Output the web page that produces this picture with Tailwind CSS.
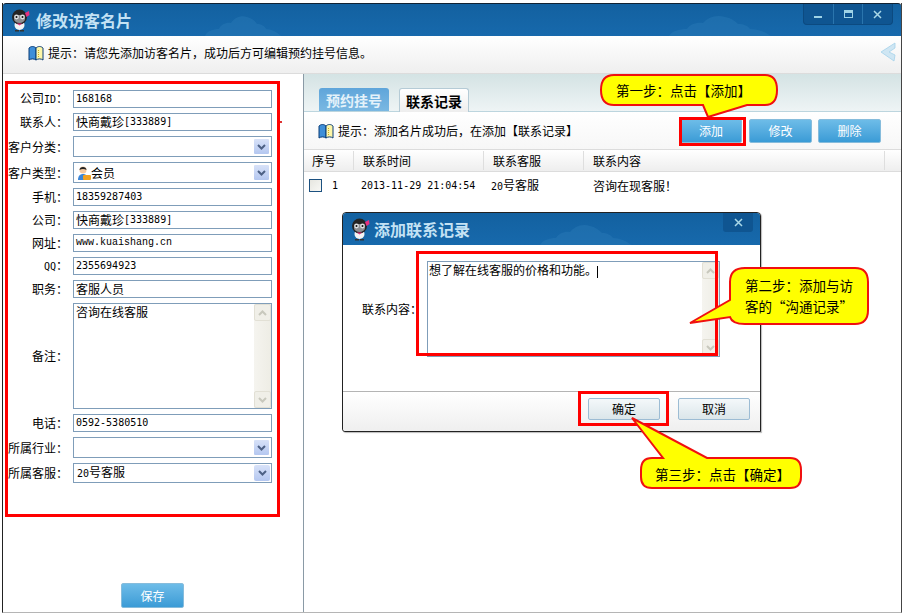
<!DOCTYPE html>
<html lang="zh-CN">
<head>
    <meta charset="UTF-8">
    <title>修改访客名片</title>
    <script src="https://cdn.jsdelivr.net/npm/@tailwindcss/browser@4"></script>
</head>
<body class="bg-white">
<div class="relative w-[903px] h-[614px] overflow-hidden bg-white text-black text-[12px] leading-[14px] font-['Noto_Sans_CJK_SC',sans-serif]">

    <!-- main window -->
    <div class="ml-[2px] mt-[3px] w-[900px] h-[610px] flex flex-col border-l border-r border-b border-l-[#222] border-r-[#444] border-b-[#b5b5b5]">
        <!-- title bar -->
        <div class="relative h-[33px] shrink-0 flex items-center pl-[7px] gap-[6px] rounded-t-[3px] border-t border-[#123] bg-gradient-to-b from-[#1361a0] to-[#1769ac]">
            <svg width="20" height="23" viewBox="0 0 20 23">
                <ellipse cx="9.500" cy="16" rx="5" ry="5" fill="#f4f4f4"/>
                <circle cx="9.500" cy="8" r="7.500" fill="#242424"/>
                <ellipse cx="9.500" cy="10" rx="5.500" ry="4" fill="#8d8f92"/>
                <circle cx="6.500" cy="8" r="2.400" fill="#dfe2e4"/>
                <circle cx="12.500" cy="8" r="2.400" fill="#dfe2e4"/>
                <circle cx="6.500" cy="8" r="1" fill="#111"/>
                <circle cx="12.500" cy="8" r="1" fill="#111"/>
                <path d="M15 4l4-2 .5 4-3 2z" fill="#e8307f"/>
                <path d="M7 14.500h5l-2.500 2z" fill="#e8307f"/>
                <path d="M5 21h4v1.500H5zM10 21h4v1.500h-4z" fill="#333"/>
            </svg>
            <span class="text-[16px] font-bold text-[#c4e2f4]">修改访客名片</span>
            <svg class="absolute left-[200px] top-[6px]" width="80" height="26" viewBox="0 0 80 26"><path d="M2 26c2-5 8-7 14-7 2-5 8-7 12-6 3-5 10-8 16-6 5 1 8 4 10 7 4 0 8 2 9 5 5 0 11 3 15 7z" fill="#2c7cb8" opacity=".4"/></svg>
            <svg class="absolute left-[664px] top-[6px]" width="106" height="26" viewBox="0 0 106 26"><path d="M2 26c3-5 10-7 18-7 3-5 10-7 16-6 4-5 13-9 22-6 6 1 10 4 13 7 6 0 10 2 12 5 7 0 16 3 21 7z" fill="#2c7cb8" opacity=".4"/></svg>
            <!-- window buttons -->
            <div class="absolute right-[8px] top-0 h-[21px] w-[90px] flex rounded-b-[4px] bg-[#0f5591] border border-t-0 border-[#0c4a80]">
                <div class="flex-1 flex items-center justify-center border-r border-[#2a75ad]"><div class="w-[8px] h-[2px] mt-[6px] bg-[#9fd3e6]"></div></div>
                <div class="flex-1 flex items-center justify-center border-r border-[#2a75ad]"><div class="w-[9px] h-[8px] border border-[#9fd3e6] border-t-[3px]"></div></div>
                <div class="flex-1 flex items-center justify-center">
                    <svg width="9" height="9" viewBox="0 0 9 9"><path d="M1 1l7 7M8 1l-7 7" stroke="#a9d8e8" stroke-width="1.500"/></svg>
                </div>
            </div>
        </div>

        <!-- tip header -->
        <div class="relative h-[38px] shrink-0 flex items-center pl-[25px] pb-[4px] gap-[4px] bg-gradient-to-b from-white to-[#efefef] border-b border-[#dcdcdc]">
            <svg width="16" height="16" viewBox="0 0 16 16">
                <path d="M1 3c2-2 5-2 7 0v12c-2-1.500-5-1.500-7 0z" fill="#3f8fd8" stroke="#0b3d77"/>
                <path d="M8 3c2-2 5-2 7 0v12c-2-1.500-5-1.500-7 0z" fill="#fdf6a8" stroke="#0b3d77"/>
                <path d="M10.500 5v7" stroke="#c9a825" stroke-dasharray="1 1"/>
            </svg>
            <span>提示&#xFF1A;请您先添加访客名片&#xFF0C;成功后方可编辑预约挂号信息。</span>
            <svg class="absolute right-[5px] top-[6px]" width="16" height="20" viewBox="0 0 16 20"><path d="M15 1L1 10l13 9 1-6-6-3 6-4z" fill="#cfe6f3" stroke="#a5d2ea" stroke-width=".8"/></svg>
        </div>

        <!-- body -->
        <div class="flex-1 flex min-h-0">
            <!-- left form -->
            <div class="relative w-[301px] shrink-0 border-r border-[#8a9aa6] flex flex-col pt-[16px]">
                <div class="flex flex-col gap-[5px]">
                    <div class="flex items-center h-[18px]">
                        <div class="w-[65px] text-right whitespace-nowrap">公司<span class="font-['DejaVu_Sans_Mono'] text-[10px]">ID</span>&#xFF1A;</div>
                        <div class="ml-[5px] w-[199px] h-full border border-[#7f9db9] pl-[2px] flex items-center font-['DejaVu_Sans_Mono'] text-[10px]">168168</div>
                    </div>
                    <div class="flex items-center h-[18px]">
                        <div class="w-[65px] text-right whitespace-nowrap">联系人&#xFF1A;</div>
                        <div class="ml-[5px] w-[199px] h-full border border-[#7f9db9] pl-[2px] flex items-center">快商戴珍<span class="font-['DejaVu_Sans_Mono'] text-[10px]">[333889]</span></div>
                    </div>
                    <div class="flex items-center h-[21px]">
                        <div class="w-[65px] text-right whitespace-nowrap">客户分类&#xFF1A;</div>
                        <div class="ml-[5px] w-[199px] h-full border border-[#7f9db9] pl-[2px] flex items-center justify-end pr-[1px]">
                            <div class="w-[17px] h-[17px] flex items-center justify-center rounded-[2px] border border-white bg-gradient-to-b from-[#d8e2f8] to-[#b4c7f0]"><svg width="9" height="6" viewBox="0 0 9 6"><path d="M1 1l3.500 3.500L8 1" fill="none" stroke="#4d6185" stroke-width="2"/></svg></div>
                        </div>
                    </div>
                    <div class="flex items-center h-[21px]">
                        <div class="w-[65px] text-right whitespace-nowrap">客户类型&#xFF1A;</div>
                        <div class="ml-[5px] w-[199px] h-full border border-[#7f9db9] pl-[3px] flex items-center pr-[1px]">
                            <svg width="14" height="16" viewBox="0 0 14 16">
                                <circle cx="6" cy="5" r="3.500" fill="#f4c9a0"/>
                                <path d="M2.500 5c0-4 7-4 7 0-2-1.500-5-1.500-7 0z" fill="#222"/>
                                <path d="M1 15c0-4 2-6 5-6s5 2 5 6z" fill="#3c86d8"/>
                                <rect x="6" y="10" width="8" height="5" rx="1" fill="#f0a020"/>
                            </svg>
                            <span class="flex-1">会员</span>
                            <div class="w-[17px] h-[17px] flex items-center justify-center rounded-[2px] border border-white bg-gradient-to-b from-[#d8e2f8] to-[#b4c7f0]"><svg width="9" height="6" viewBox="0 0 9 6"><path d="M1 1l3.500 3.500L8 1" fill="none" stroke="#4d6185" stroke-width="2"/></svg></div>
                        </div>
                    </div>
                    <div class="flex items-center h-[18px]">
                        <div class="w-[65px] text-right whitespace-nowrap">手机&#xFF1A;</div>
                        <div class="ml-[5px] w-[199px] h-full border border-[#7f9db9] pl-[2px] flex items-center font-['DejaVu_Sans_Mono'] text-[10px]">18359287403</div>
                    </div>
                    <div class="flex items-center h-[18px]">
                        <div class="w-[65px] text-right whitespace-nowrap">公司&#xFF1A;</div>
                        <div class="ml-[5px] w-[199px] h-full border border-[#7f9db9] pl-[2px] flex items-center">快商戴珍<span class="font-['DejaVu_Sans_Mono'] text-[10px]">[333889]</span></div>
                    </div>
                    <div class="flex items-center h-[18px]">
                        <div class="w-[65px] text-right whitespace-nowrap">网址&#xFF1A;</div>
                        <div class="ml-[5px] w-[199px] h-full border border-[#7f9db9] pl-[2px] flex items-center font-['Liberation_Mono'] text-[10px]">www.kuaishang.cn</div>
                    </div>
                    <div class="flex items-center h-[18px]">
                        <div class="w-[65px] text-right whitespace-nowrap"><span class="font-['DejaVu_Sans_Mono'] text-[10px]">QQ</span>&#xFF1A;</div>
                        <div class="ml-[5px] w-[199px] h-full border border-[#7f9db9] pl-[2px] flex items-center font-['DejaVu_Sans_Mono'] text-[10px]">2355694923</div>
                    </div>
                    <div class="flex items-center h-[18px]">
                        <div class="w-[65px] text-right whitespace-nowrap">职务&#xFF1A;</div>
                        <div class="ml-[5px] w-[199px] h-full border border-[#7f9db9] pl-[2px] flex items-center">客服人员</div>
                    </div>
                    <div class="flex items-center h-[106px]">
                        <div class="w-[65px] text-right whitespace-nowrap">备注&#xFF1A;</div>
                        <div class="ml-[5px] w-[199px] h-full border border-[#7f9db9] flex">
                            <div class="flex-1 pl-[2px] pt-[1px]">咨询在线客服</div>
                            <div class="w-[17px] h-full flex flex-col justify-between bg-gradient-to-r from-[#f5f4ef] to-[#eeede5]">
                                <div class="h-[17px] flex items-center justify-center rounded-[2px] border border-[#e2e0d5] bg-[#f0efe8]"><svg width="9" height="6" viewBox="0 0 9 6"><path d="M1 5l3.500-3.500L8 5" fill="none" stroke="#c8c8bd" stroke-width="2"/></svg></div>
                                <div class="h-[17px] flex items-center justify-center rounded-[2px] border border-[#e2e0d5] bg-[#f0efe8]"><svg width="9" height="6" viewBox="0 0 9 6"><path d="M1 1l3.500 3.500L8 1" fill="none" stroke="#c8c8bd" stroke-width="2"/></svg></div>
                            </div>
                        </div>
                    </div>
                    <div class="flex items-center h-[18px]">
                        <div class="w-[65px] text-right whitespace-nowrap">电话&#xFF1A;</div>
                        <div class="ml-[5px] w-[199px] h-full border border-[#7f9db9] pl-[2px] flex items-center font-['DejaVu_Sans_Mono'] text-[10px]">0592-5380510</div>
                    </div>
                    <div class="flex items-center h-[21px]">
                        <div class="w-[65px] text-right whitespace-nowrap">所属行业&#xFF1A;</div>
                        <div class="ml-[5px] w-[199px] h-full border border-[#7f9db9] pl-[2px] flex items-center justify-end pr-[1px]">
                            <div class="w-[17px] h-[17px] flex items-center justify-center rounded-[2px] border border-white bg-gradient-to-b from-[#d8e2f8] to-[#b4c7f0]"><svg width="9" height="6" viewBox="0 0 9 6"><path d="M1 1l3.500 3.500L8 1" fill="none" stroke="#4d6185" stroke-width="2"/></svg></div>
                        </div>
                    </div>
                    <div class="flex items-center h-[20px]">
                        <div class="w-[65px] text-right whitespace-nowrap">所属客服&#xFF1A;</div>
                        <div class="ml-[5px] w-[199px] h-full border border-[#7f9db9] pl-[3px] flex items-center pr-[1px]">
                            <span class="flex-1"><span class="font-['DejaVu_Sans_Mono'] text-[10px]">20</span>号客服</span>
                            <div class="w-[16px] h-[16px] flex items-center justify-center rounded-[2px] bg-gradient-to-b from-[#d8e2f8] to-[#b4c7f0]"><svg width="9" height="6" viewBox="0 0 9 6"><path d="M1 1l3.500 3.500L8 1" fill="none" stroke="#4d6185" stroke-width="2"/></svg></div>
                        </div>
                    </div>
                </div>
                <div class="mt-auto mb-[4px] self-start ml-[118px] w-[63px] h-[25px] flex items-center justify-center rounded-[2px] border border-[#86bcdc] bg-gradient-to-b from-[#6dbce8] to-[#3a9bd6] text-white">保存</div>
            </div>

            <!-- right panel -->
            <div class="flex-1 flex flex-col min-w-0">
                <div class="h-[38px] shrink-0 flex items-end pl-[15px] gap-[10px] bg-gradient-to-b from-[#d4e3e4] to-[#eef4f5] border-b border-[#bcd5de]">
                    <div class="w-[70px] h-[23px] flex items-center justify-center rounded-t-[3px] bg-gradient-to-b from-[#5fa5da] to-[#7ab8e2] text-[#e4f2fa] text-[14px] font-bold">预约挂号</div>
                    <div class="w-[70px] h-[24px] -mb-px flex items-center justify-center rounded-t-[3px] border border-b-0 border-[#b5cbd6] bg-gradient-to-b from-white to-[#eeeeee] text-[14px] font-bold">联系记录</div>
                </div>
                <div class="h-[37px] shrink-0 flex items-center pl-[14px] pr-[20px] gap-[4px] bg-gradient-to-b from-white to-[#f7f7f7]">
                    <svg width="16" height="16" viewBox="0 0 16 16">
                        <path d="M1 3c2-2 5-2 7 0v12c-2-1.500-5-1.500-7 0z" fill="#3f8fd8" stroke="#0b3d77"/>
                        <path d="M8 3c2-2 5-2 7 0v12c-2-1.500-5-1.500-7 0z" fill="#fdf6a8" stroke="#0b3d77"/>
                        <path d="M10.500 5v7" stroke="#c9a825" stroke-dasharray="1 1"/>
                    </svg>
                    <span class="flex-1">提示&#xFF1A;添加名片成功后&#xFF0C;在添加【联系记录】</span>
                    <div class="w-[62px] h-[24px] flex items-center justify-center rounded-[2px] border border-[#86bcdc] bg-gradient-to-b from-[#6dbce8] to-[#3a9bd6] text-white">添加</div>
                    <div class="ml-[3px] w-[63px] h-[24px] flex items-center justify-center rounded-[2px] border border-[#86bcdc] bg-gradient-to-b from-[#6dbce8] to-[#3a9bd6] text-white">修改</div>
                    <div class="ml-[2px] w-[63px] h-[24px] flex items-center justify-center rounded-[2px] border border-[#86bcdc] bg-gradient-to-b from-[#6dbce8] to-[#3a9bd6] text-white">删除</div>
                </div>
                <!-- table header -->
                <div class="h-[23px] shrink-0 flex items-center border-t border-b border-[#dcdcdc] bg-gradient-to-b from-white to-[#eeeeee]">
                    <div class="w-[50px] pl-[8px] h-[19px] flex items-center border-r border-[#dedede]">序号</div>
                    <div class="w-[130px] pl-[9px] h-[19px] flex items-center border-r border-[#dedede]">联系时间</div>
                    <div class="w-[100px] pl-[9px] h-[19px] flex items-center border-r border-[#dedede]">联系客服</div>
                    <div class="w-[301px] pl-[9px] h-[19px] flex items-center border-r border-[#dedede]">联系内容</div>
                </div>
                <!-- record row -->
                <div class="h-[27px] shrink-0 flex items-center">
                    <div class="w-[50px] pl-[5px] flex items-center gap-[10px]">
                        <div class="w-[13px] h-[13px] border border-[#1c5180] bg-gradient-to-br from-[#e6e6e0] to-[#f8f8f5]"></div>
                        <span class="font-['DejaVu_Sans_Mono'] text-[10px]">1</span>
                    </div>
                    <div class="w-[130px] pl-[7px] font-['DejaVu_Sans_Mono'] text-[10px]">2013-11-29 21:04:54</div>
                    <div class="w-[100px] pl-[7px]"><span class="font-['DejaVu_Sans_Mono'] text-[10px]">20</span>号客服</div>
                    <div class="pl-[9px]">咨询在现客服&#xFF01;</div>
                </div>
            </div>
        </div>
    </div>

    <!-- dialog -->
    <div class="absolute left-[342px] top-[212px] w-[419px] h-[220px] flex flex-col bg-white border border-[#222] rounded-t-[4px] rounded-bl-[3px] shadow-[1px_1px_1px_#bbb]">
        <div class="relative h-[32px] shrink-0 flex items-center pl-[7px] gap-[4px] rounded-t-[3px] bg-gradient-to-b from-[#1361a0] to-[#1769ac]">
            <svg width="20" height="23" viewBox="0 0 20 23">
                <ellipse cx="9.500" cy="16" rx="5" ry="5" fill="#f4f4f4"/>
                <circle cx="9.500" cy="8" r="7.500" fill="#242424"/>
                <ellipse cx="9.500" cy="10" rx="5.500" ry="4" fill="#8d8f92"/>
                <circle cx="6.500" cy="8" r="2.400" fill="#dfe2e4"/>
                <circle cx="12.500" cy="8" r="2.400" fill="#dfe2e4"/>
                <circle cx="6.500" cy="8" r="1" fill="#111"/>
                <circle cx="12.500" cy="8" r="1" fill="#111"/>
                <path d="M15 4l4-2 .5 4-3 2z" fill="#e8307f"/>
                <path d="M7 14.500h5l-2.500 2z" fill="#e8307f"/>
                <path d="M5 21h4v1.500H5zM10 21h4v1.500h-4z" fill="#333"/>
            </svg>
            <span class="text-[16px] font-bold text-[#c4e2f4]">添加联系记录</span>
            <svg class="absolute left-[195px] top-[6px]" width="95" height="26" viewBox="0 0 95 26"><path d="M2 26c3-5 9-7 16-7 3-5 9-7 14-6 4-5 12-9 20-6 5 1 9 4 12 7 5 0 9 2 11 5 6 0 14 3 18 7z" fill="#2c7cb8" opacity=".4"/></svg>
            <div class="absolute right-[7px] top-0 w-[30px] h-[19px] flex items-center justify-center rounded-b-[3px] bg-[#0f5591]">
                <svg width="9" height="9" viewBox="0 0 9 9"><path d="M1 1l7 7M8 1l-7 7" stroke="#a9d8e8" stroke-width="1.500"/></svg>
            </div>
        </div>
        <div class="flex-1 flex items-start pl-[19px] pt-[16px]">
            <div class="flex items-center">
                <span class="w-[65px] shrink-0 whitespace-nowrap">联系内容&#xFF1A;</span>
                <div class="w-[293px] h-[96px] flex border border-[#7f9db9]">
                    <div class="flex-1 pl-[1px] pt-[1px]">想了解在线客服的价格和功能。<span class="inline-block w-px h-[12px] align-middle bg-black"></span></div>
                    <div class="w-[17px] h-full flex flex-col justify-between bg-gradient-to-r from-[#f5f4ef] to-[#eeede5]">
                        <div class="h-[17px] flex items-center justify-center rounded-[2px] border border-[#e2e0d5] bg-[#f0efe8]"><svg width="9" height="6" viewBox="0 0 9 6"><path d="M1 5l3.500-3.500L8 5" fill="none" stroke="#c8c8bd" stroke-width="2"/></svg></div>
                        <div class="h-[17px] flex items-center justify-center rounded-[2px] border border-[#e2e0d5] bg-[#f0efe8]"><svg width="9" height="6" viewBox="0 0 9 6"><path d="M1 1l3.500 3.500L8 1" fill="none" stroke="#c8c8bd" stroke-width="2"/></svg></div>
                    </div>
                </div>
            </div>
        </div>
        <div class="h-[40px] shrink-0 flex items-start justify-end pt-[6px] pr-[10px] gap-[18px] border-t border-[#b4b4b4] bg-gradient-to-b from-white to-[#efefef] rounded-bl-[3px]">
            <div class="w-[72px] h-[22px] flex items-center justify-center rounded-[2px] border border-[#9cbcd4] bg-gradient-to-b from-[#f4f8fa] to-[#dbe6ea]">确定</div>
            <div class="w-[72px] h-[22px] flex items-center justify-center rounded-[2px] border border-[#9cbcd4] bg-gradient-to-b from-[#f4f8fa] to-[#dbe6ea]">取消</div>
        </div>
    </div>

    <!-- red highlight frames -->
    <div class="absolute left-[5px] top-[81px] w-[275px] h-[436px] border-[3px] border-[#ff0000]"></div>
    <div class="absolute left-[679px] top-[117px] w-[67px] h-[29px] border-[3px] border-[#ff0000]"></div>
    <div class="absolute left-[416px] top-[251px] w-[302px] h-[105px] border-[3px] border-[#ff0000]"></div>
    <div class="absolute left-[578px] top-[391px] w-[91px] h-[35px] border-[3px] border-[#ff0000]"></div>
    <div class="absolute left-[280px] top-[121px] w-[2px] h-[2px] bg-[#d33]"></div>

    <!-- callouts -->
    <svg class="absolute left-0 top-0" width="903" height="614" viewBox="0 0 903 614">
        <path d="M614 75H765Q777 75 777 90Q777 105 765 105H747L708 117L703 105H614Q601 105 601 90Q601 75 614 75Z" fill="#ffff00" stroke="#f01010" stroke-width="2"/>
        <path d="M745 268H855Q868 268 868 282V310Q868 324 855 324H745Q732 324 730 317L690 323L730 300V282Q730 268 745 268Z" fill="#ffff00" stroke="#f01010" stroke-width="2"/>
        <path d="M652 458H663L632 418L707 458H790Q801 458 801 470V477Q801 488 790 488H652Q641 488 641 477V470Q641 458 652 458Z" fill="#ffff00" stroke="#f01010" stroke-width="2"/>
    </svg>
    <div class="absolute left-[616px] top-[82px] text-[13.500px] leading-[16px] whitespace-nowrap">第一步&#xFF1A;点击【添加】</div>
    <div class="absolute left-[745px] top-[275px] text-[13.500px] leading-[21px] whitespace-nowrap">第二步&#xFF1A;添加与访<br>客的&#x201C;沟通记录&#x201D;</div>
    <div class="absolute left-[655px] top-[466px] text-[13.500px] leading-[16px] whitespace-nowrap">第三步&#xFF1A;点击【确定】</div>
</div>
</body>
</html>
